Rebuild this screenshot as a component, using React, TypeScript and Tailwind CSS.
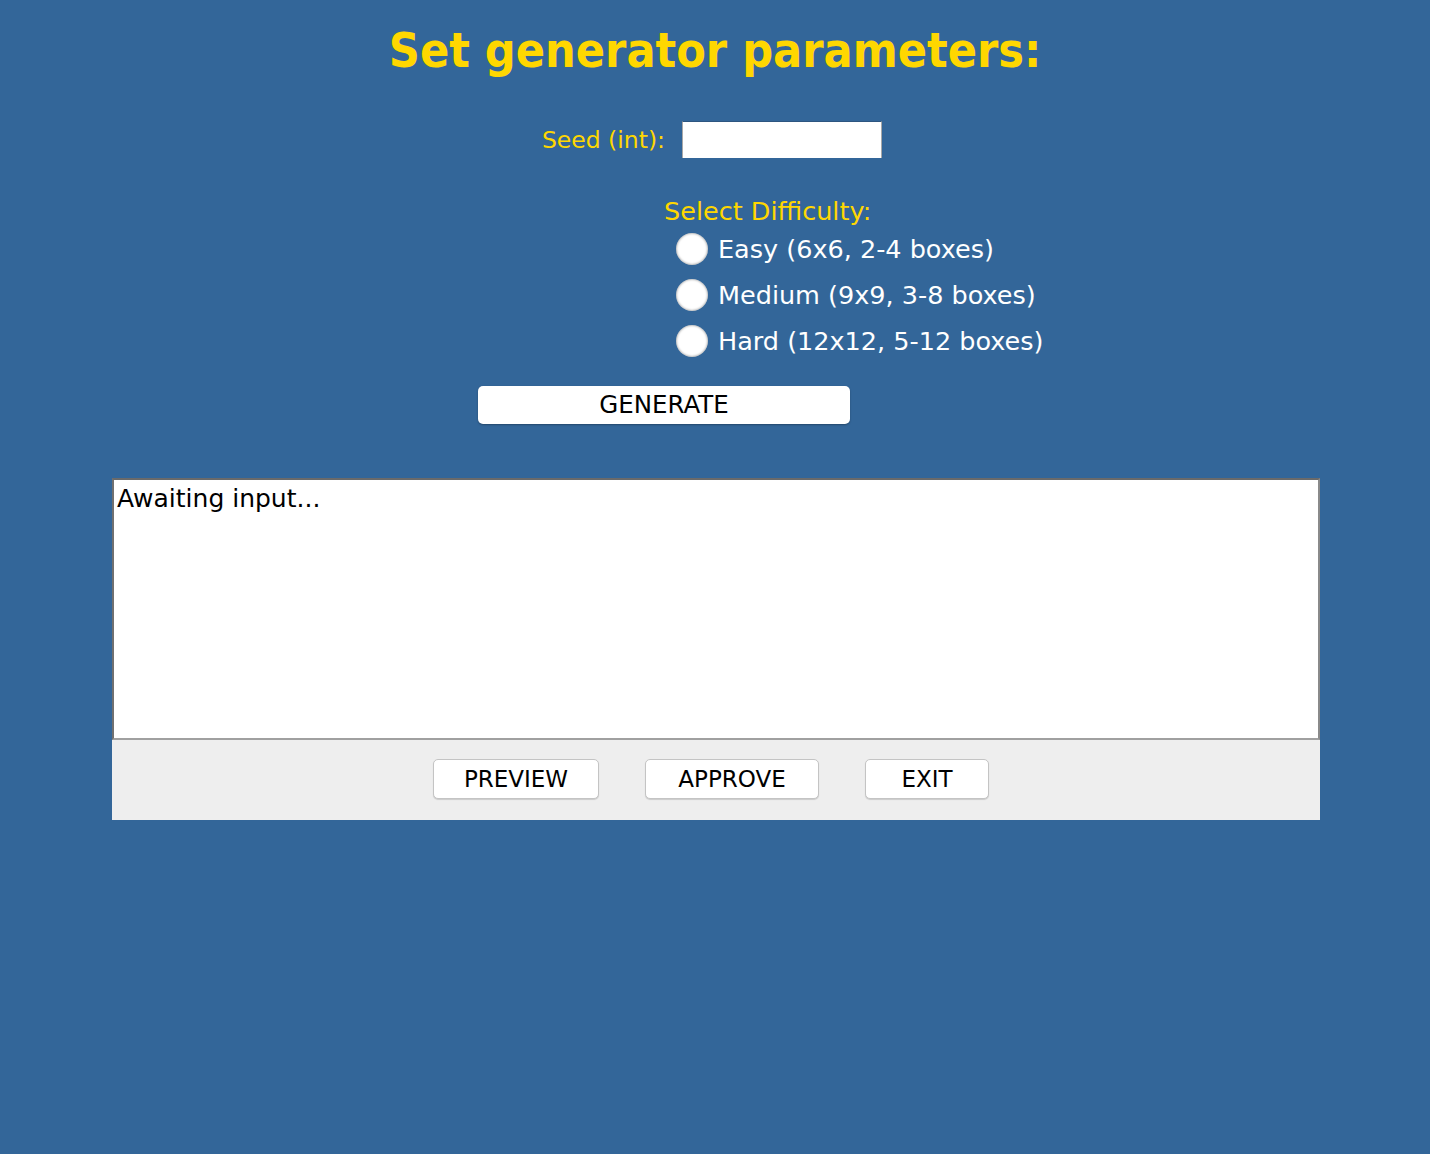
import React from "react";

const body = { fontFamily: '"DejaVu Sans", "Liberation Sans", sans-serif' };
const title = { fontFamily: '"DejaVu Sans Condensed", "DejaVu Sans", sans-serif' };

function Radio({ label }: { label: string }) {
  return (
    <div className="flex h-[46px] items-center">
      <div className="ml-[12px] h-[32px] w-[32px] rounded-full bg-white shadow-[inset_0_0_2px_1px_rgba(0,0,0,0.25)]" />
      <span className="ml-[10px] text-[25.5px] leading-[30px] text-white">{label}</span>
    </div>
  );
}

function Btn({ label, w }: { label: string; w: string }) {
  return (
    <button
      className={`${w} h-[40px] rounded-[5px] border border-[#c4c4c4] bg-white text-[23px] leading-[30px] text-black shadow-[0_1px_1px_rgba(0,0,0,0.15)]`}
    >
      {label}
    </button>
  );
}

export default function App() {
  return (
    <div className="min-h-[1154px] w-full bg-[#336699]" style={body}>
      <div className="pt-[22px]">
        <h1
          className="text-center text-[48px] font-bold leading-[56px] text-[#ffd700]"
          style={title}
        >
          Set generator parameters:
        </h1>
      </div>

      <div className="mt-[43px] flex items-center">
        <div className="flex w-[665px] justify-end">
          <span className="text-[23.5px] leading-[30px] text-[#ffd700]">Seed (int):</span>
        </div>
        <div className="ml-[17px] h-[37px] w-[200px] border-x border-x-[#a8a8a8] border-t border-t-[#2d5680] bg-white" />
      </div>

      <div className="ml-[664px] mt-[38px]">
        <div className="h-[30px] text-[25.5px] leading-[30px] text-[#ffd700]">Select Difficulty:</div>
        <Radio label="Easy (6x6, 2-4 boxes)" />
        <Radio label="Medium (9x9, 3-8 boxes)" />
        <Radio label="Hard (12x12, 5-12 boxes)" />
      </div>

      <div className="ml-[478px] mt-[22px]">
        <button className="h-[38px] w-[372px] rounded-[5px] bg-white text-[24.5px] leading-[30px] text-black shadow-[0_1px_2px_rgba(0,0,0,0.3)]">
          GENERATE
        </button>
      </div>

      <div className="ml-[112px] mt-[54px] w-[1208px]">
        <div className="h-[262px] border-2 border-b-[#a0a0a0] border-l-[#707070] border-r-[#8a8a8a] border-t-[#6a6a6a] bg-white pl-[3px] pt-[4px]">
          <div className="text-[25px] leading-[30px] text-black">Awaiting input...</div>
        </div>
        <div className="flex h-[80px] items-start justify-center gap-[46px] bg-[#eeeeee] pr-[10px] pt-[19px]">
          <Btn label="PREVIEW" w="w-[166px]" />
          <Btn label="APPROVE" w="w-[174px]" />
          <Btn label="EXIT" w="w-[124px]" />
        </div>
      </div>
    </div>
  );
}
